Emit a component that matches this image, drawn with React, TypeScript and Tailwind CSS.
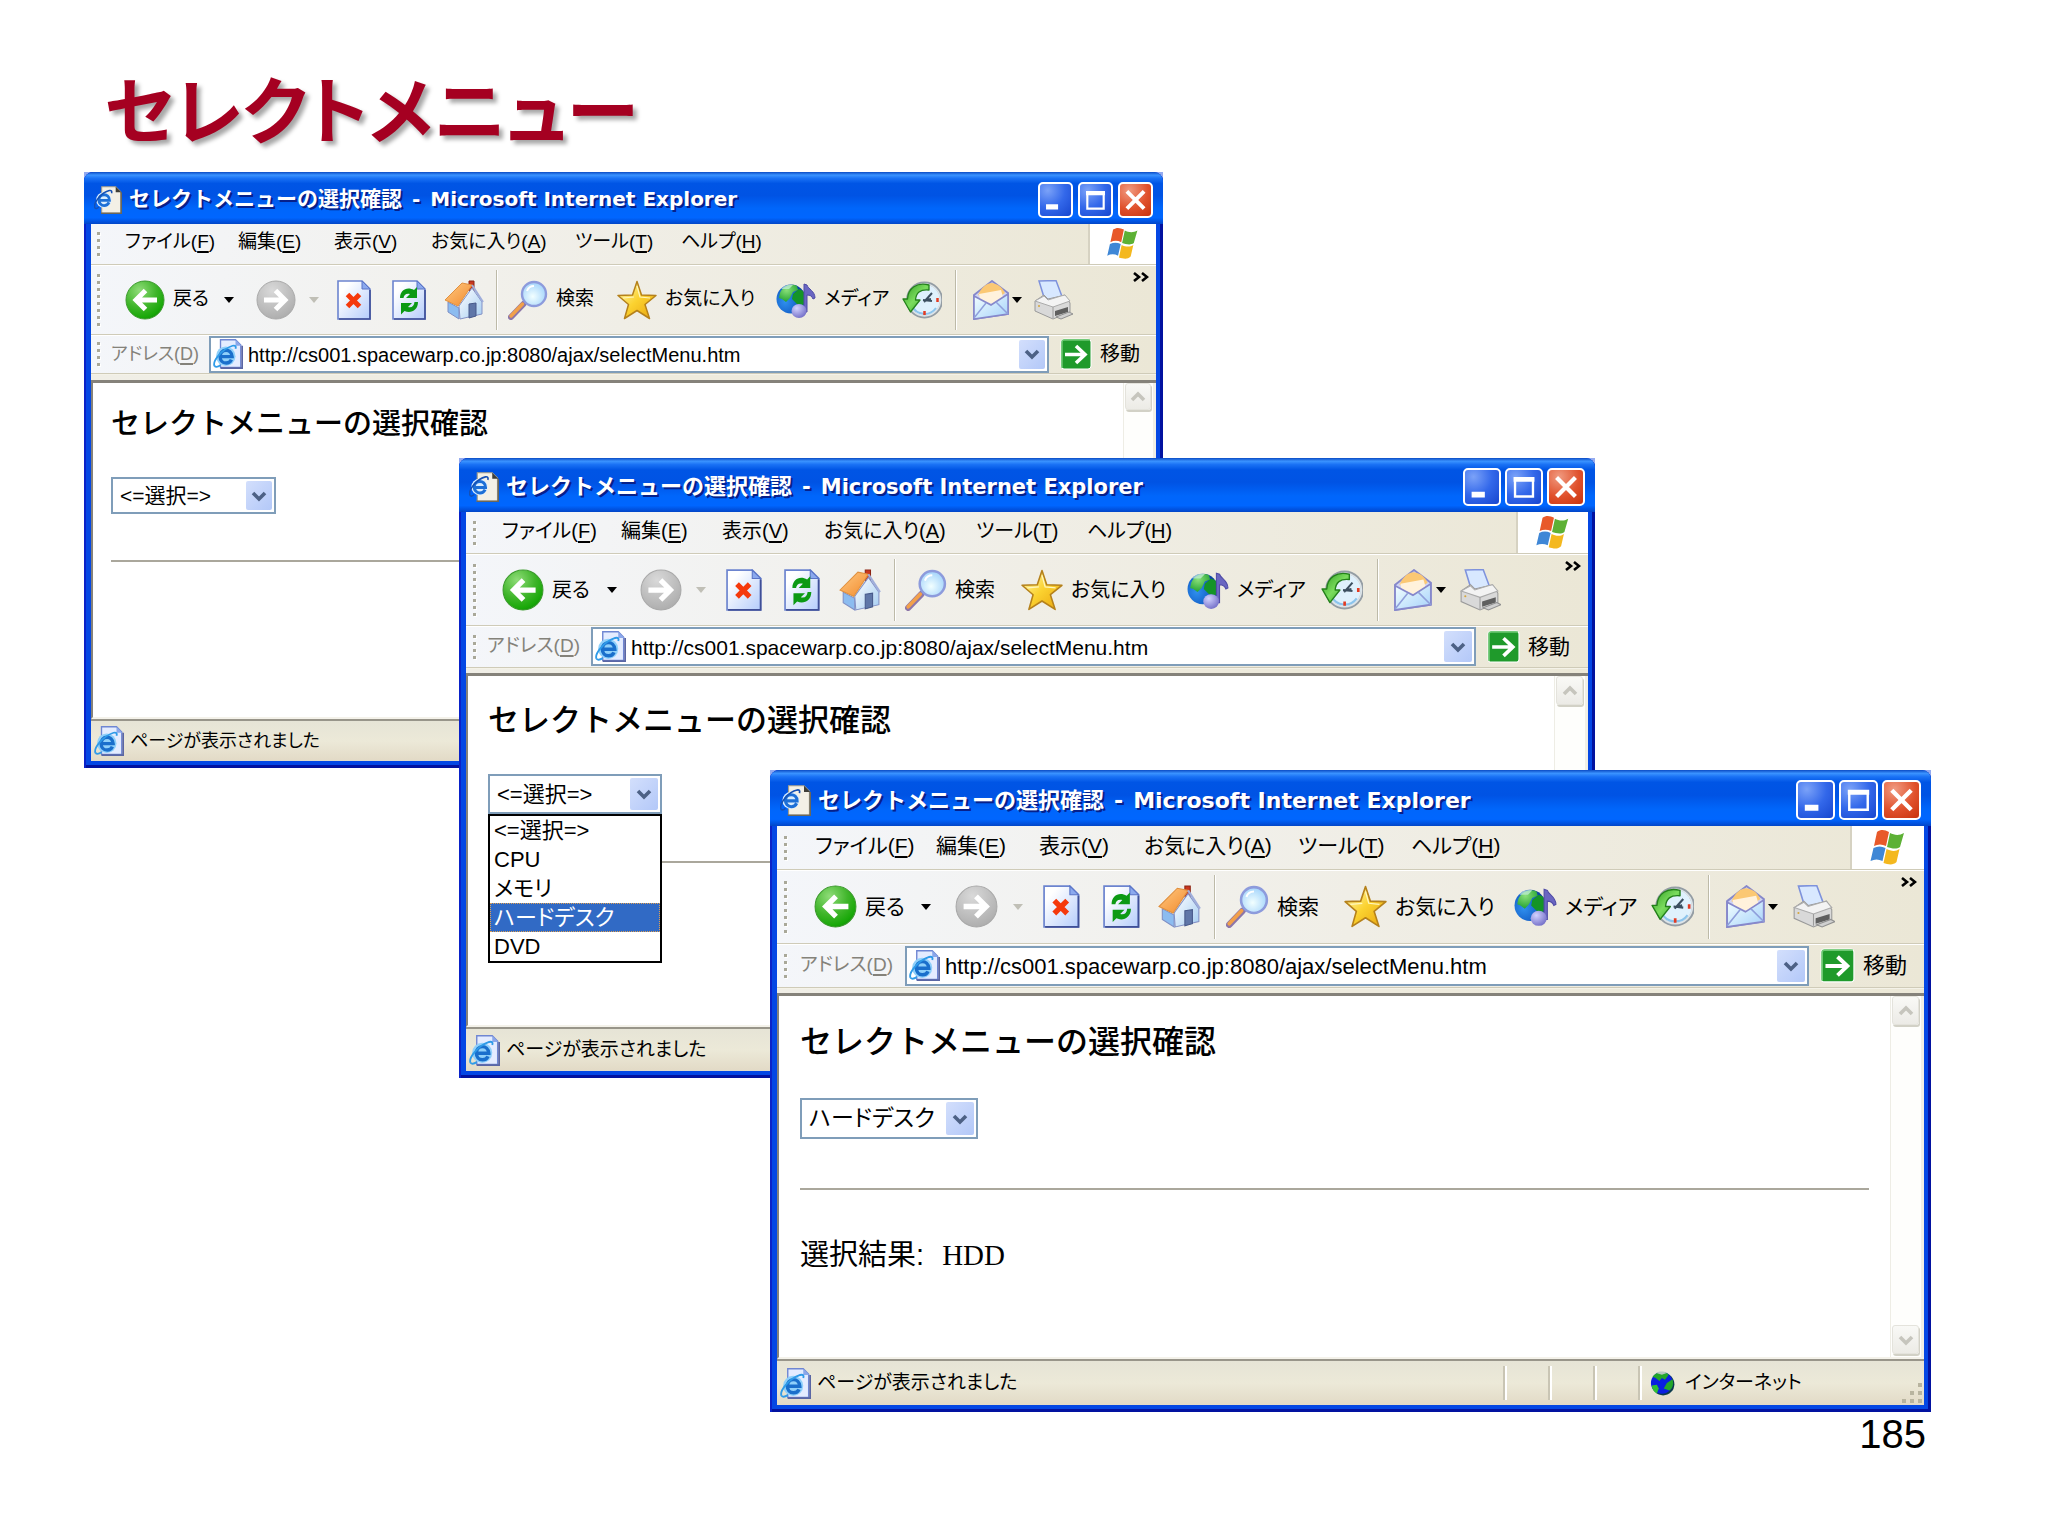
import React from "react";

type Size = "sm" | "md" | "lg";

const JP = "font-['Liberation_Sans','Noto_Sans_CJK_JP',sans-serif]";

const M = {
  sm: {
    text: "text-[20px]",
    kana: "text-[19px]",
    note: "text-[18px]",
    field: "text-[21px]",
    titleJp: "text-[21px]",
    titleText: "text-[20px]",
    titleBar: "h-[52px]",
    titleIcon: "size-[28px]",
    caption: "w-[35px] h-[36px]",
    captionGap: "gap-[5px]",
    menu: "h-[41px] pl-[6px] grid-cols-[28px_113px_96px_97px_144px_106px_1fr_68px]",
    flag: "size-[36px]",
    tool: "h-[70px] pl-[6px] grid-cols-[28px_99px_32px_53px_28px_55px_52px_52px_12px_109px_159px_126px_53px_17px_40px_21px_1fr]",
    icon: "size-[40px]",
    sep: "h-[60px]",
    addr: "h-[39px] pl-[6px] grid-cols-[14px_98px_1fr_107px]",
    box: "h-[37px]",
    go: "size-[32px]",
    drop: "w-[26px]",
    strip: "h-[6px]",
    view: "h-[339px]",
    body: "pl-[18px] pt-[22px] pr-[21px]",
    h: "text-[29px] leading-[32px]",
    select: "mt-[40px] h-[37px] w-[165px]",
    hr: "mt-[46px]",
    bar: "w-[33px]",
    barBtn: "h-[27px] w-[26px]",
    status: "h-[42px]",
    statusIcon: "size-[30px]",
  },
  md: {
    text: "text-[21px]",
    kana: "text-[20px]",
    note: "text-[19px]",
    field: "text-[22px]",
    titleJp: "text-[22px]",
    titleText: "text-[21px]",
    titleBar: "h-[54px]",
    titleIcon: "size-[30px]",
    caption: "w-[38px] h-[38px]",
    captionGap: "gap-[4px]",
    menu: "h-[42px] pl-[7px] grid-cols-[29px_119px_101px_102px_152px_111px_1fr_72px]",
    flag: "size-[38px]",
    tool: "h-[72px] pl-[7px] grid-cols-[29px_105px_33px_56px_30px_58px_55px_55px_11px_116px_166px_134px_56px_16px_43px_23px_1fr]",
    icon: "size-[42px]",
    sep: "h-[62px]",
    addr: "h-[42px] pl-[7px] grid-cols-[14px_104px_1fr_112px]",
    box: "h-[39px]",
    go: "size-[33px]",
    drop: "w-[28px]",
    strip: "h-[5px]",
    view: "h-[354px]",
    body: "pl-[20px] pt-[25px] pr-[21px]",
    h: "text-[31px] leading-[34px]",
    select: "mt-[39px] h-[40px] w-[174px]",
    hr: "mt-[47px]",
    bar: "w-[34px]",
    barBtn: "h-[29px] w-[27px]",
    status: "h-[44px]",
    statusIcon: "size-[31px]",
  },
  lg: {
    text: "text-[22px]",
    kana: "text-[21px]",
    note: "text-[19px]",
    field: "text-[23px]",
    titleJp: "text-[22px]",
    titleText: "text-[22px]",
    titleBar: "h-[56px]",
    titleIcon: "size-[31px]",
    caption: "w-[39px] h-[40px]",
    captionGap: "gap-[4px]",
    menu: "h-[44px] pl-[7px] grid-cols-[31px_121px_103px_105px_154px_113px_1fr_74px]",
    flag: "size-[40px]",
    tool: "h-[74px] pl-[7px] grid-cols-[30px_107px_34px_58px_30px_60px_55px_56px_12px_118px_170px_137px_57px_17px_43px_24px_1fr]",
    icon: "size-[43px]",
    sep: "h-[64px]",
    addr: "h-[44px] pl-[7px] grid-cols-[16px_105px_1fr_115px]",
    box: "h-[40px]",
    go: "size-[35px]",
    drop: "w-[28px]",
    strip: "h-[5px]",
    view: "h-[366px]",
    body: "pl-[21px] pt-[25px] pr-[21px]",
    h: "text-[32px] leading-[36px]",
    select: "mt-[41px] h-[41px] w-[178px]",
    hr: "mt-[49px]",
    bar: "w-[34px]",
    barBtn: "h-[29px] w-[27px]",
    status: "h-[46px]",
    statusIcon: "size-[31px]",
  },
};

type IconProps = { className?: string };

function Svg({ className, children }: React.PropsWithChildren<IconProps>) {
  return (
    <svg viewBox="0 0 40 40" className={`shrink-0 ${className ?? ""}`} fill="none" aria-hidden="true">
      {children}
    </svg>
  );
}

function Gradients() {
  return (
    <svg className="absolute size-0" aria-hidden="true">
      <defs>
        <radialGradient id="green" cx="0.35" cy="0.25" r="0.9">
          <stop offset="0" stopColor="#8fdc78" />
          <stop offset="0.5" stopColor="#3fb52a" />
          <stop offset="0.8" stopColor="#18a808" />
          <stop offset="1" stopColor="#0f7d0c" />
        </radialGradient>
        <radialGradient id="gray" cx="0.4" cy="0.25" r="0.9">
          <stop offset="0" stopColor="#d9d9d9" />
          <stop offset="1" stopColor="#a6a6a6" />
        </radialGradient>
        <linearGradient id="page" x1="0" y1="0" x2="1" y2="1">
          <stop offset="0.2" stopColor="#ffffff" />
          <stop offset="1" stopColor="#b4ccfb" />
        </linearGradient>
        <linearGradient id="roof" x1="0" y1="0" x2="1" y2="1">
          <stop offset="0" stopColor="#ffc982" />
          <stop offset="1" stopColor="#f28a2c" />
        </linearGradient>
        <linearGradient id="wall" x1="0" y1="0" x2="1" y2="1">
          <stop offset="0" stopColor="#ffffff" />
          <stop offset="1" stopColor="#a5cdf2" />
        </linearGradient>
        <radialGradient id="lens" cx="0.45" cy="0.6" r="0.6">
          <stop offset="0" stopColor="#f2ffff" />
          <stop offset="1" stopColor="#a4d4fb" />
        </radialGradient>
        <linearGradient id="gold" x1="0" y1="0" x2="1" y2="1">
          <stop offset="0.1" stopColor="#fff3a0" />
          <stop offset="0.5" stopColor="#fbd230" />
          <stop offset="1" stopColor="#e8a30c" />
        </linearGradient>
        <radialGradient id="sea" cx="0.3" cy="0.6" r="0.8">
          <stop offset="0" stopColor="#2f8fee" />
          <stop offset="0.6" stopColor="#1460c8" />
          <stop offset="1" stopColor="#062f8e" />
        </radialGradient>
        <radialGradient id="land" cx="0.4" cy="0.3" r="0.8">
          <stop offset="0" stopColor="#8be07a" />
          <stop offset="1" stopColor="#159a28" />
        </radialGradient>
        <radialGradient id="note" cx="0.35" cy="0.3" r="0.8">
          <stop offset="0" stopColor="#d2d2ff" />
          <stop offset="1" stopColor="#6d68c4" />
        </radialGradient>
        <linearGradient id="mail" x1="0" y1="0" x2="1" y2="1">
          <stop offset="0" stopColor="#f4ffff" />
          <stop offset="1" stopColor="#a6d2fa" />
        </linearGradient>
        <linearGradient id="arrow" x1="0" y1="0" x2="1" y2="1">
          <stop offset="0" stopColor="#2e9c20" />
          <stop offset="0.5" stopColor="#7bdc5e" />
          <stop offset="1" stopColor="#2aa31e" />
        </linearGradient>
      </defs>
    </svg>
  );
}

function BackIcon(p: IconProps) {
  return (
    <Svg {...p}>
      <circle cx="20" cy="20" r="19" fill="url(#green)" stroke="#3b9a2c" />
      <path d="M32 20H12M20.500 10.500L11 20l9.500 9.500" stroke="#fff" strokeWidth="5" />
    </Svg>
  );
}

function ForwardIcon(p: IconProps) {
  return (
    <Svg {...p}>
      <circle cx="20" cy="20" r="19" fill="url(#gray)" stroke="#a9a9a9" />
      <path d="M8 20h20M19.500 10.500L29 20l-9.500 9.500" stroke="#fff" strokeWidth="5" />
    </Svg>
  );
}

function Page({ className, children }: React.PropsWithChildren<IconProps>) {
  return (
    <Svg className={className}>
      <path d="M1 1h24l8 8v30H1z" fill="url(#page)" stroke="#6c84cf" strokeWidth="1.600" />
      <path d="M2 39h31V10" stroke="#3f4f96" strokeWidth="1.600" />
      <path d="M25 1v8h8z" fill="#8ba9ee" stroke="#5a74c6" />
      {children}
    </Svg>
  );
}

function StopIcon(p: IconProps) {
  return (
    <Page {...p}>
      <path d="M10.500 14.500l12 12M22.500 14.500l-12 12" stroke="#f5390c" strokeWidth="5" />
    </Page>
  );
}

function RefreshIcon(p: IconProps) {
  return (
    <Page {...p}>
      <path d="M8 18c0-8 7-12 14-8l3-3v11H14l4-4c-4-1-6 1-6.500 4z" fill="#0c9a14" />
      <path d="M26 22c0 8-7 12-13.500 9L9 34.500V23h11l-4 4c4 1 6-1 6.500-5z" fill="#0c9a14" />
    </Page>
  );
}

function HomeIcon(p: IconProps) {
  return (
    <Svg {...p}>
      <path d="M25 1h5v10h-5z" fill="#c9371f" stroke="#8d2413" />
      <path d="M4 22l11 6v11L4 32z" fill="#8cbcf0" stroke="#7f8fc4" />
      <path d="M15 26L28 8l10 14v12l-22 5z" fill="url(#wall)" stroke="#8391c6" />
      <path d="M25 24l7-1v13l-7 2z" fill="#5f76a8" stroke="#47598a" />
      <path d="M1 20L18 3l10 2-14 21z" fill="url(#roof)" stroke="#e0903f" />
      <path d="M28 5l11 17" stroke="#9faedb" strokeWidth="2" />
    </Svg>
  );
}

function SearchIcon(p: IconProps) {
  return (
    <Svg {...p}>
      <path d="M15.500 24L3 37" stroke="#8d76a8" strokeWidth="6" strokeLinecap="round" />
      <path d="M14.500 24L3 36" stroke="#f2a04a" strokeWidth="3.500" strokeLinecap="round" />
      <circle cx="26" cy="14" r="12" fill="url(#lens)" stroke="#8d9bdc" strokeWidth="2.400" />
      <path d="M19 11c1-3 4-5 7-5" stroke="#fff" strokeWidth="2" />
    </Svg>
  );
}

function StarIcon(p: IconProps) {
  return (
    <Svg {...p}>
      <path
        d="M20 1.500l4.500 13.500 14.500.5-11 9 4.500 14L20 30.500 7.500 38.500l4-14L1 15.500 15.500 15z"
        fill="url(#gold)"
        stroke="#b5811b"
        strokeWidth="1.500"
        strokeLinejoin="round"
      />
      <path d="M20 6l3 11 10 1M6 18l11-1" stroke="#fff6bd" strokeWidth="1.200" />
    </Svg>
  );
}

function MediaIcon(p: IconProps) {
  return (
    <Svg {...p}>
      <circle cx="15" cy="19" r="14.500" fill="url(#sea)" />
      <path d="M4 13C7 6 15 3 21 6l1 4-5 2-3 6-4 4-4-3-3-1z" fill="url(#land)" />
      <path d="M17 14l6-5 4 2c3 5 3 10 0 14l-6-1-5-5z" fill="#149427" />
      <path d="M5 9c3-4 8-5 12-4l-4 4z" fill="#c7efe0" opacity="0.700" />
      <path d="M28 4l3 1c1 4 8 6 8 13l-2 1c-1-3-3-4-6-4v17h-3z" fill="#6a66c2" stroke="#4f4ba6" />
      <ellipse cx="23" cy="31" rx="7.500" ry="7" fill="url(#note)" />
    </Svg>
  );
}

function HistoryIcon(p: IconProps) {
  return (
    <Svg {...p}>
      <circle cx="22.500" cy="20" r="17" fill="#dff1fd" stroke="#949da4" strokeWidth="3" />
      <circle cx="22.500" cy="20" r="16" stroke="#dde4e8" strokeWidth="1.500" />
      <path d="M10 26a14 14 0 0 0 24 2" stroke="#8cc4ec" strokeWidth="2" />
      <path d="M22 22l8-9M21 20l9 1M24 20l5-1" stroke="#3c4f60" strokeWidth="2" />
      <path d="M35.500 18v4M22.500 31v4" stroke="#e33b22" strokeWidth="2.500" />
      <path
        d="M27 5C15 2 6 8 5.500 19H1l7.500 13L18 20h-4.500C14 13 18 9 27 10z"
        fill="url(#arrow)"
        stroke="#24801b"
        strokeWidth="1.300"
        strokeLinejoin="round"
      />
    </Svg>
  );
}

function MailIcon(p: IconProps) {
  return (
    <Svg {...p}>
      <path d="M2 15L20 1l16 12v21L2 39z" fill="#cfd4f4" stroke="#8688cb" strokeWidth="1.800" />
      <path d="M6 15c3-7 8-12 14-12 6 1 10 4 13 10l-12 8z" fill="#fbc873" />
      <path d="M7 14l22-4 2 7-11 7-12-5z" fill="#fff2dc" />
      <path d="M2 16l17 9 17-11v20L2 39z" fill="url(#mail)" stroke="#8688cb" strokeWidth="1.600" />
      <path d="M2 38l12-15M36 34L24 22" stroke="#8f9fdb" strokeWidth="1.500" />
    </Svg>
  );
}

function PrinterIcon(p: IconProps) {
  return (
    <Svg {...p}>
      <path d="M6 1l17-.5 6 16-17 4z" fill="#d8e8ff" stroke="#7e92dc" strokeWidth="1.500" />
      <path d="M2 21l9-6 4 4 13-3 4-1 5 8v9l-17 7L2 31z" fill="#d9d9d9" stroke="#9a9a9a" />
      <path d="M2 21l18 6 17-6-5-6-4 1-13 4-4-4z" fill="#f3f3f3" stroke="#ababab" />
      <path d="M20 27v11" stroke="#9c9c9c" />
      <path d="M22 31l13-4v5l-13 4z" fill="#5f5f5f" />
      <path d="M23 37l13-5 4 2-12 5z" fill="#d0d0d0" stroke="#909090" />
      <circle cx="6" cy="26" r="1" fill="#d5a63b" />
    </Svg>
  );
}

function IeDocumentIcon(p: IconProps) {
  return (
    <Svg {...p}>
      <path d="M11 1h20l7 7v31H11z" fill="#f3f0e6" stroke="#a29d8c" strokeWidth="1.500" />
      <path d="M10 39h29V9" stroke="#6b675a" strokeWidth="2" />
      <path d="M31 1v8h8z" fill="#3e3e38" />
      <circle cx="14" cy="20" r="11" fill="#d8ecff" />
      <path d="M7 20.500h15C22 15 18 12.500 14.500 12.500c-4.500 0-7.500 3.500-7.500 7.500s3 8 7.500 8c3.500 0 5.500-1.500 7-4.500" stroke="#1d6fd6" strokeWidth="4" />
      <path d="M1 31C-1 23 11 9 22 6.500c3-.5 4 1 3 4" stroke="#1550b4" strokeWidth="2.200" />
      <path d="M1 31c2 2 4 1 6-1" stroke="#1550b4" strokeWidth="2.200" />
    </Svg>
  );
}

function IePageIcon(p: IconProps) {
  return (
    <Svg {...p}>
      <path d="M10 1h20l7 7v30H10z" fill="#e4ecff" stroke="#6f86d2" strokeWidth="1.800" />
      <path d="M10 39h29V9" stroke="#5a66a4" strokeWidth="2.500" />
      <path d="M30 1v8h8z" fill="#8aa7ea" />
      <circle cx="17" cy="23" r="13" fill="#8fd0fa" />
      <path d="M9.500 23.500h16C25 17.500 21 15 17.500 15 12.500 15 9.500 19 9.500 23.500s3 8.500 8 8.500c3.500 0 6-2 7-4.500" stroke="#1a6fcc" strokeWidth="4.500" />
      <path d="M2 36c-3-6 9-22 24-27 4-1 5 1 4 4" stroke="#2f9be8" strokeWidth="2.400" />
      <path d="M2 36c2 2 5 1 8-1" stroke="#2f9be8" strokeWidth="2.400" />
    </Svg>
  );
}

function FlagIcon(p: IconProps) {
  return (
    <Svg {...p}>
      <path d="M9 4c4-3 8-2 12 0l-3 14c-4-2-8-2-12 0z" fill="#e8592a" />
      <path d="M22 5c4 2 9 3 14 0l-4 14c-4 3-9 1-13 0z" fill="#5db135" />
      <path d="M5.500 20c4-2 8-2 12 0l-3 13c-4-2-8-2-12 0z" fill="#3f87d6" />
      <path d="M18.500 21c4 2 9 3 13 0l-3 13c-4 4-9 2-13 1z" fill="#f4b81e" />
    </Svg>
  );
}

function GlobeIcon(p: IconProps) {
  return (
    <Svg {...p}>
      <circle cx="21" cy="21" r="18" fill="#0a3a4c" />
      <circle cx="19" cy="19" r="17.500" fill="#0a1ee0" />
      <path d="M4 9C10 1 24 0 30 6l-6 8-5-3-4 5-6-5z" fill="#23a62a" />
      <path d="M10 3c5-3 12-3 17 0l-8 3z" fill="#b6c8c0" />
      <path d="M36 13c2 7 1 14-5 18l-9-3 5-9z" fill="#23a62a" />
      <path d="M3 23l8-1 3 6-3 8c-5-3-8-8-8-13z" fill="#2fbf34" />
    </Svg>
  );
}

function Chevron({ up, className }: { up?: boolean; className?: string }) {
  return (
    <svg viewBox="0 0 16 12" className={`w-[16px] ${className ?? ""}`} fill="none" aria-hidden="true">
      <path d={up ? "M2 9l6-6 6 6" : "M2 3l6 6 6-6"} stroke="currentColor" strokeWidth="3.600" />
    </svg>
  );
}

function Triangle({ className }: IconProps) {
  return (
    <svg viewBox="0 0 10 6" className={`w-[10px] ${className ?? ""}`} aria-hidden="true">
      <path d="M0 0h10L5 6z" fill="currentColor" />
    </svg>
  );
}

function Grip({ dots }: { dots: number }) {
  return (
    <span className="flex flex-col gap-[4px]" aria-hidden="true">
      {Array.from({ length: dots }, (_, i) => (
        <span key={i} className="size-[3px] bg-[#a9a899] shadow-[1px_1px_0_#fff]" />
      ))}
    </span>
  );
}

function Caption({ kind, size }: { kind: "min" | "max" | "close"; size: Size }) {
  const close = kind === "close";
  return (
    <button
      aria-label={close ? "閉じる" : kind === "min" ? "最小化" : "最大化"}
      className={`${M[size].caption} rounded-[5px] border-2 border-white ${
        close
          ? "bg-[radial-gradient(circle_at_30%_20%,#f09a80,#e0512c_55%,#c8330e)]"
          : "bg-[radial-gradient(circle_at_25%_20%,#7ba2f8,#3368ea_50%,#1746cf)]"
      }`}
    >
      <svg viewBox="0 0 36 36" className="size-full" fill="none" aria-hidden="true">
        {kind === "min" && <path d="M7 26h14" stroke="#fff" strokeWidth="6" />}
        {kind === "max" && (
          <>
            <path d="M8.500 9v19h19V9z" stroke="#fff" strokeWidth="2.500" />
            <path d="M7 10h22" stroke="#fff" strokeWidth="5" />
          </>
        )}
        {close && <path d="M8 8l20 20M28 8L8 28" stroke="#fff" strokeWidth="4.500" />}
      </svg>
    </button>
  );
}

const MENUS = [
  ["ファイル", "F"],
  ["編集", "E"],
  ["表示", "V"],
  ["お気に入り", "A"],
  ["ツール", "T"],
  ["ヘルプ", "H"],
];

function Accel({ label, mark }: { label: string; mark: string }) {
  return (
    <>
      {label}(<span className="underline decoration-2 underline-offset-[3px]">{mark}</span>)
    </>
  );
}

function DropFace({ className }: IconProps) {
  return (
    <span
      className={`flex items-center justify-center rounded-[2px] bg-linear-to-br from-[#d3dffc] to-[#b3c8f8] text-[#4d6185] ${className ?? ""}`}
    >
      <Chevron />
    </span>
  );
}

function ScrollButton({ up, size }: { up?: boolean; size: Size }) {
  return (
    <button
      aria-label={up ? "上へスクロール" : "下へスクロール"}
      className={`${M[size].barBtn} flex items-center justify-center rounded-[3px] border border-[#e4e3dc] bg-linear-to-b from-[#f9f9f6] to-[#ecebe6] text-[#c6c5bd] shadow-[1px_2px_0_#d2d1c6]`}
    >
      <Chevron up={up} />
    </button>
  );
}

const OPTIONS = ["<=選択=>", "CPU", "メモリ", "ハードデスク", "DVD"];

type BrowserProps = {
  size: Size;
  place: string;
  value: string;
  open?: boolean;
  result?: string;
};

function Browser({ size, place, value, open, result }: BrowserProps) {
  const m = M[size];
  const row = "grid items-center border-b border-[#cfcbb8] shadow-[0_1px_0_#fff]";
  const btn = "flex items-center gap-[8px] whitespace-nowrap";
  return (
    <section className={`absolute bg-[#93aaf0] ${place}`}>
      <div className="overflow-hidden rounded-t-[9px] bg-[#0447e4] shadow-[inset_2px_0_0_#0a22c8,inset_-3px_-3px_0_#0212a0]">
        <div
          className={`${m.titleBar} flex items-center justify-between bg-[linear-gradient(180deg,#0b4bc4_0%,#3a93ff_6%,#1a72f5_12%,#0055e5_22%,#0053e4_45%,#0066fb_70%,#0066ff_88%,#0150dc_96%,#0246c6_100%)] px-[10px] pt-[4px]`}
        >
          <h2 className="flex items-center gap-[7px] whitespace-nowrap font-bold text-white [text-shadow:2px_2px_0_#06208a]">
            <IeDocumentIcon className={m.titleIcon} />
            <span className="flex items-baseline gap-[10px] font-['DejaVu_Sans','Noto_Sans_CJK_JP',sans-serif]">
              <span className={m.titleJp}>セレクトメニューの選択確認</span>
              <span className={m.titleText}>-</span>
              <span className={m.titleText}>Microsoft Internet Explorer</span>
            </span>
          </h2>
          <div className={`flex ${m.captionGap}`}>
            <Caption kind="min" size={size} />
            <Caption kind="max" size={size} />
            <Caption kind="close" size={size} />
          </div>
        </div>

        <div className="px-[7px] pb-[7px]">
          <div className={`bg-linear-to-r from-[#f4f6fa] via-[#f0eee6] to-[#ebe7d6] ${m.text}`}>
            <nav className={`${m.menu} ${m.kana} ${row} [font-feature-settings:'palt']`}>
              <Grip dots={4} />
              {MENUS.map(([label, mark]) => (
                <button key={mark} className="whitespace-nowrap pb-[4px] text-left">
                  <Accel label={label} mark={mark} />
                </button>
              ))}
              <span className="flex h-full items-center justify-center border-l-2 border-[#d6d2c2] bg-white">
                <FlagIcon className={m.flag} />
              </span>
            </nav>

            <div className={`${m.tool} ${m.kana} ${row} [font-feature-settings:'palt']`}>
              <Grip dots={8} />
              <button className={btn}>
                <BackIcon className={m.icon} />
                戻る
              </button>
              <button aria-label="戻る履歴"><Triangle /></button>
              <button aria-label="進む"><ForwardIcon className={m.icon} /></button>
              <button aria-label="進む履歴"><Triangle className="text-[#c0bfb6]" /></button>
              <button aria-label="中止"><StopIcon className={m.icon} /></button>
              <button aria-label="更新"><RefreshIcon className={m.icon} /></button>
              <button aria-label="ホーム"><HomeIcon className={m.icon} /></button>
              <span className={`${m.sep} w-[2px] border-l border-[#bdbaa8] bg-white`} />
              <button className={btn}>
                <SearchIcon className={m.icon} />
                検索
              </button>
              <button className={btn}>
                <StarIcon className={m.icon} />
                お気に入り
              </button>
              <button className={btn}>
                <MediaIcon className={m.icon} />
                メディア
              </button>
              <button aria-label="履歴"><HistoryIcon className={m.icon} /></button>
              <span className={`${m.sep} w-[2px] border-l border-[#bdbaa8] bg-white`} />
              <button aria-label="メール"><MailIcon className={m.icon} /></button>
              <button aria-label="メールメニュー"><Triangle /></button>
              <div className="flex h-full items-center justify-between pr-[7px]">
                <button aria-label="印刷"><PrinterIcon className={m.icon} /></button>
                <button aria-label="その他" className="self-start pt-[7px]">
                  <svg viewBox="0 0 16 10" className="w-[16px]" fill="none" aria-hidden="true">
                    <path d="M1 1l5 4-5 4M9 1l5 4-5 4" stroke="#000" strokeWidth="2.600" />
                  </svg>
                </button>
              </div>
            </div>

            <div className={`${m.addr} ${row}`}>
              <Grip dots={4} />
              <label htmlFor={`url-${size}`} className={`${m.note} whitespace-nowrap text-[#84827a] [font-feature-settings:'palt']`}>
                <Accel label="アドレス" mark="D" />
              </label>
              <div className={`${m.box} flex items-center gap-[5px] border-2 border-[#7f9db9] bg-white p-[2px]`}>
                <IePageIcon className={m.statusIcon} />
                <input
                  id={`url-${size}`}
                  className="min-w-0 flex-1 bg-transparent pt-[2px] outline-none"
                  defaultValue="http://cs001.spacewarp.co.jp:8080/ajax/selectMenu.htm"
                />
                <button aria-label="アドレス一覧" className="h-full">
                  <DropFace className={`${m.drop} h-full`} />
                </button>
              </div>
              <button className="flex items-center gap-[8px] pl-[11px]">
                <svg viewBox="0 0 32 32" className={m.go} fill="none" aria-hidden="true">
                  <rect x="1" y="1" width="30" height="30" rx="3" fill="#1f9a2b" stroke="#fff" />
                  <path d="M2 30V4q0-2 2-2h26" stroke="#6cc873" strokeWidth="1.500" />
                  <path d="M5 16.500h19M16 8l9 8.500-9 8.500" stroke="#fff" strokeWidth="3.600" />
                </svg>
                移動
              </button>
            </div>
            <div className={`${m.strip} bg-[#ece9d8]/60`} />
          </div>

          <div className={`${m.view} flex border-b-2 border-l-2 border-t-[3px] border-b-[#f4f2ea] border-l-[#85827a] border-t-[#85827a] bg-white`}>
            <div className={`flex-1 ${m.body}`}>
              <h3 className={`${m.h} whitespace-nowrap font-medium font-['Noto_Sans_CJK_JP',sans-serif]`}>セレクトメニューの選択確認</h3>
              <div className={`${m.select} ${m.field} relative`}>
                <select
                  aria-label="セレクトメニュー"
                  defaultValue={value}
                  className="size-full appearance-none border-2 border-[#7f9db9] bg-white pl-[7px] outline-none [font-feature-settings:'palt']"
                >
                  {OPTIONS.map((o) => (
                    <option key={o}>{o}</option>
                  ))}
                </select>
                <DropFace className={`${m.drop} pointer-events-none absolute inset-y-[4px] right-[4px]`} />
                {open && (
                  <ul role="listbox" className="absolute inset-x-0 top-full border-2 border-black bg-white [font-feature-settings:'palt']">
                    {OPTIONS.map((o) => (
                      <li
                        key={o}
                        role="option"
                        aria-selected={o === "ハードデスク"}
                        className={
                          o === "ハードデスク"
                            ? "h-[29px] bg-[#316ac5] pl-[4px] leading-[29px] text-white outline-1 -outline-offset-1 outline-dotted outline-[#e0a050]"
                            : "h-[29px] pl-[4px] leading-[29px]"
                        }
                      >
                        {o}
                      </li>
                    ))}
                  </ul>
                )}
              </div>
              <hr className={`${m.hr} border-t-2 border-[#aaa79c]`} />
              {result && (
                <p className="mt-[45px] text-[29px] leading-[40px]">
                  選択結果: <span className="pl-[10px] font-['Liberation_Serif',serif]">{result}</span>
                </p>
              )}
            </div>
            <div className={`${m.bar} flex flex-col justify-between border-l border-r-[3px] border-l-[#eeede5] border-r-[#f1efe6] bg-[#fefefc] px-[1px] pb-[3px]`}>
              <ScrollButton up size={size} />
              <ScrollButton size={size} />
            </div>
          </div>

          <footer
            className={`${m.status} ${m.note} flex items-center border-t-2 border-[#98958a] bg-linear-to-b from-[#e6e4d6] via-[#ece9d8] to-[#e2dac6] pl-[3px] [font-feature-settings:'palt']`}
          >
            <IePageIcon className={m.statusIcon} />
            <span className="flex-1 pl-[6px]">ページが表示されました</span>
            <span className="h-[34px] w-[45px] border-l-2 border-[#c9c5b4] shadow-[inset_2px_0_0_#fff]" />
            <span className="h-[34px] w-[45px] border-l-2 border-[#c9c5b4] shadow-[inset_2px_0_0_#fff]" />
            <span className="h-[34px] w-[45px] border-l-2 border-[#c9c5b4] shadow-[inset_2px_0_0_#fff]" />
            <span className="flex h-[34px] w-[264px] items-center gap-[10px] border-l-2 border-[#c9c5b4] pl-[10px] shadow-[inset_2px_0_0_#fff]">
              <GlobeIcon className="size-[25px]" />
              インターネット
            </span>
            <svg viewBox="0 0 22 22" className="w-[22px] self-end" fill="#b8b49f" aria-hidden="true">
              <path d="M16 0h4v4h-4zM16 8h4v4h-4zM8 8h4v4H8zM16 16h4v4h-4zM8 16h4v4H8zM0 16h4v4H0z" />
            </svg>
          </footer>
        </div>
      </div>
    </section>
  );
}

export default function App() {
  return (
    <div className={`flex min-h-screen flex-col bg-white text-black ${JP}`}>
      <Gradients />
      <header className="h-[172px] pl-[104px] pt-[63px]">
        <h1 className="text-[73px] font-bold leading-[100px] text-[#a50021] [font-feature-settings:'palt'] [text-shadow:4px_4px_4px_rgba(0,0,0,0.35)]">
          セレクトメニュー
        </h1>
      </header>
      <main className="relative h-[1240px]">
        <Browser size="sm" place="left-[84px] top-0 w-[1079px]" value="<=選択=>" />
        <Browser size="md" place="left-[459px] top-[286px] w-[1136px]" value="<=選択=>" open />
        <Browser size="lg" place="left-[770px] top-[598px] w-[1161px]" value="ハードデスク" result="HDD" />
      </main>
      <footer className="pr-[122px] text-right text-[40px] leading-[44px]">185</footer>
    </div>
  );
}
